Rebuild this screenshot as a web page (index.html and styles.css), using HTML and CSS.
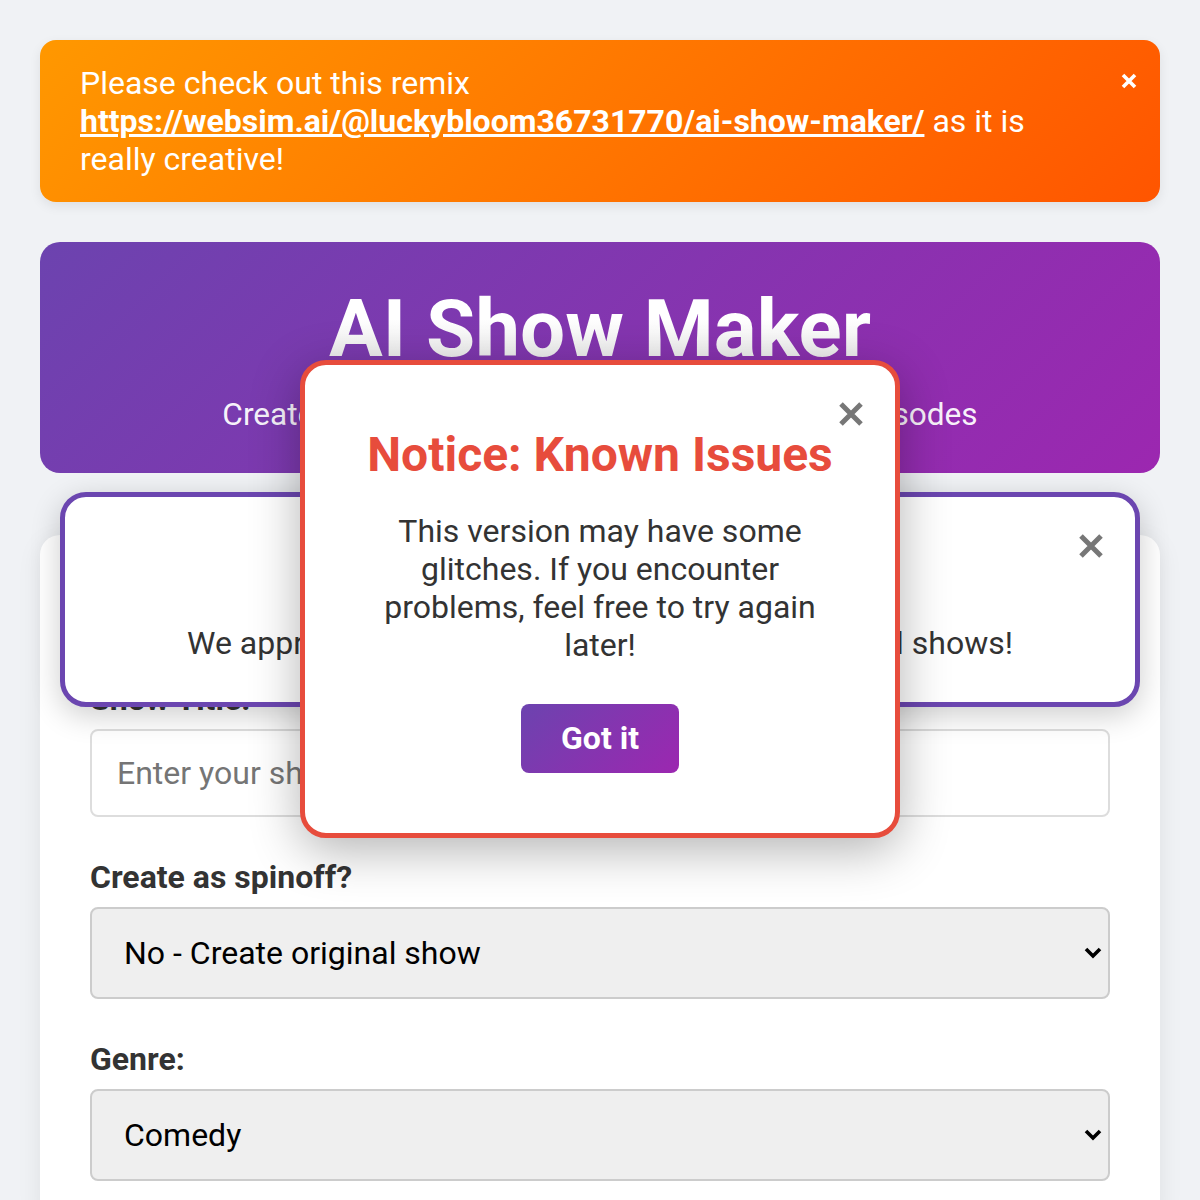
FILE: index.html
```html
<!DOCTYPE html>
<html lang="en">
<head>
<meta charset="utf-8">
<title>AI Show Maker</title>
<link rel="stylesheet" href="styles.css">
</head>
<body>
<div class="page">
  <div class="remix-banner">
    <p class="remix-text">Please check out this remix <a class="remix-link" href="#">https://websim.ai/@luckybloom36731770/ai-show-maker/</a> as it is really creative!</p>
    <button class="close-btn close-white" aria-label="Close">
      <svg width="16" height="16" viewBox="0 0 16 16"><path d="M2 2 L14 14 M14 2 L2 14" stroke="currentColor" stroke-width="3.6"/></svg>
    </button>
  </div>

  <header class="hero">
    <h1 class="hero-title">AI Show Maker</h1>
    <p class="hero-sub">Create amazing TV shows with AI-generated episodes</p>
  </header>

  <main class="form-card">
    <h2 class="form-heading">Create Your Show</h2>
    <div class="field">
      <label class="field-label">Show Title:</label>
      <input class="text-input" type="text" placeholder="Enter your show title">
    </div>
    <div class="field">
      <label class="field-label">Create as spinoff?</label>
      <div class="select-wrap">
        <select class="select-input"><option>No - Create original show</option></select>
        <svg class="chevron" width="18" height="14" viewBox="0 0 18 14"><path d="M2 3 L9 10 L16 3" fill="none" stroke="#000" stroke-width="3.6"/></svg>
      </div>
    </div>
    <div class="field">
      <label class="field-label">Genre:</label>
      <div class="select-wrap">
        <select class="select-input"><option>Comedy</option></select>
        <svg class="chevron" width="18" height="14" viewBox="0 0 18 14"><path d="M2 3 L9 10 L16 3" fill="none" stroke="#000" stroke-width="3.6"/></svg>
      </div>
    </div>
  </main>
</div>

<div class="thanks-popup">
  <button class="close-btn close-gray close-thanks" aria-label="Close">
    <svg width="24" height="24" viewBox="0 0 24 24"><path d="M2 2 L22 22 M22 2 L2 22" stroke="currentColor" stroke-width="5"/></svg>
  </button>
  <h3 class="thanks-title">Thank You!</h3>
  <p class="thanks-text">We appreciate you using this tool to create original shows!</p>
</div>

<div class="notice-modal">
  <button class="close-btn close-gray close-notice" aria-label="Close">
    <svg width="24" height="24" viewBox="0 0 24 24"><path d="M2 2 L22 22 M22 2 L2 22" stroke="currentColor" stroke-width="5"/></svg>
  </button>
  <h2 class="notice-title">Notice: Known Issues</h2>
  <p class="notice-text">This version may have some glitches. If you encounter problems, feel free to try again later!</p>
  <button class="got-it">Got it</button>
</div>
</body>
</html>
```

FILE: styles.css
```css
* { box-sizing: border-box; }

html, body {
  margin: 0;
  padding: 0;
}

body {
  background: #f0f2f5;
  font-family: Roboto, "Noto Sans", "Liberation Sans", sans-serif;
  color: #333;
}

.page {
  padding: 40px;
  display: flex;
  flex-direction: column;
}

/* Remix banner */
.remix-banner {
  position: relative;
  background: linear-gradient(135deg, #ff9800, #ff5500);
  border-radius: 16px;
  padding: 24px 80px 24px 40px;
  color: #fff;
  box-shadow: 0 4px 12px rgba(0, 0, 0, 0.08);
}

.remix-text {
  margin: 0;
  font-size: 32px;
  line-height: 38px;
}

.remix-link {
  color: #fff;
  font-weight: 700;
  text-decoration: underline;
  white-space: nowrap;
}

.close-btn {
  position: absolute;
  background: none;
  border: none;
  padding: 0;
  cursor: pointer;
  display: flex;
}

.close-white {
  color: #fff;
  top: 33px;
  right: 23px;
}

.close-gray {
  color: #777;
}

/* Hero */
.hero {
  margin-top: 40px;
  background: linear-gradient(135deg, #6c43af, #9c27b0);
  border-radius: 20px;
  padding: 40px;
  text-align: center;
  color: #fff;
}

.hero-title {
  margin: 0;
  font-size: 80px;
  line-height: 94px;
  font-weight: 700;
  background: linear-gradient(180deg, #ffffff 40%, #e6e6e6);
  -webkit-background-clip: text;
  background-clip: text;
  color: transparent;
}

.hero-sub {
  margin: 21px 0 0;
  font-size: 31.6px;
  line-height: 36px;
  color: rgba(255, 255, 255, 0.95);
}

/* Form card */
.form-card {
  margin-top: 62px;
  background: #fff;
  border-radius: 20px;
  padding: 50px 50px 40px;
  box-shadow: 0 6px 24px rgba(0, 0, 0, 0.08);
  display: flex;
  flex-direction: column;
  gap: 42px;
}

.form-heading {
  margin: 0;
  font-size: 36px;
  line-height: 54px;
  text-align: center;
  color: #6c43af;
}

.field {
  display: flex;
  flex-direction: column;
  gap: 12px;
}

.field-label {
  font-size: 32px;
  line-height: 36px;
  font-weight: 700;
  color: #333;
}

.text-input {
  height: 88px;
  border: 2px solid #ddd;
  border-radius: 8px;
  padding: 0 25px;
  font-family: inherit;
  font-size: 32px;
  color: #333;
  background: #fff;
}

.text-input::placeholder {
  color: #757575;
}

.select-wrap {
  position: relative;
}

.select-input {
  width: 100%;
  height: 92px;
  -webkit-appearance: none;
  appearance: none;
  border: 2px solid #ccc;
  border-radius: 8px;
  background: #efefef;
  padding: 0 32px;
  font-family: inherit;
  font-size: 32px;
  color: #000;
}

.chevron {
  position: absolute;
  right: 8px;
  top: 39px;
}

/* Thanks popup */
.thanks-popup {
  position: absolute;
  top: 492px;
  left: 60px;
  width: 1080px;
  background: #fff;
  border: 5px solid #6b46b0;
  border-radius: 26px;
  padding: 40px;
  text-align: center;
  box-shadow: 0 8px 30px rgba(0, 0, 0, 0.2);
  z-index: 10;
}

.close-thanks {
  top: 37px;
  right: 32px;
}

.thanks-title {
  margin: 0 0 42px;
  font-size: 36px;
  line-height: 45px;
  color: #6b46b0;
}

.thanks-text {
  margin: 0;
  font-size: 32px;
  line-height: 38px;
  color: #333;
}

/* Notice modal */
.notice-modal {
  position: absolute;
  top: 360px;
  left: 300px;
  width: 600px;
  background: #fff;
  border: 5px solid #e74c3c;
  border-radius: 26px;
  padding: 40px 60px 60px;
  text-align: center;
  box-shadow: 0 12px 50px rgba(0, 0, 0, 0.3);
  z-index: 20;
}

.close-notice {
  top: 37px;
  right: 32px;
}

.notice-title {
  margin: 22px 0 29px;
  font-size: 48px;
  line-height: 56px;
  font-weight: 700;
  color: #e74c3c;
  white-space: nowrap;
}

.notice-text {
  margin: 0 0 40px;
  font-size: 32px;
  line-height: 38px;
  color: #333;
}

.got-it {
  background: linear-gradient(135deg, #6c43af, #9c27b0);
  color: #fff;
  border: none;
  border-radius: 8px;
  padding: 17px 40px;
  font-family: inherit;
  font-size: 32px;
  line-height: 35px;
  font-weight: 700;
  cursor: pointer;
}
```
